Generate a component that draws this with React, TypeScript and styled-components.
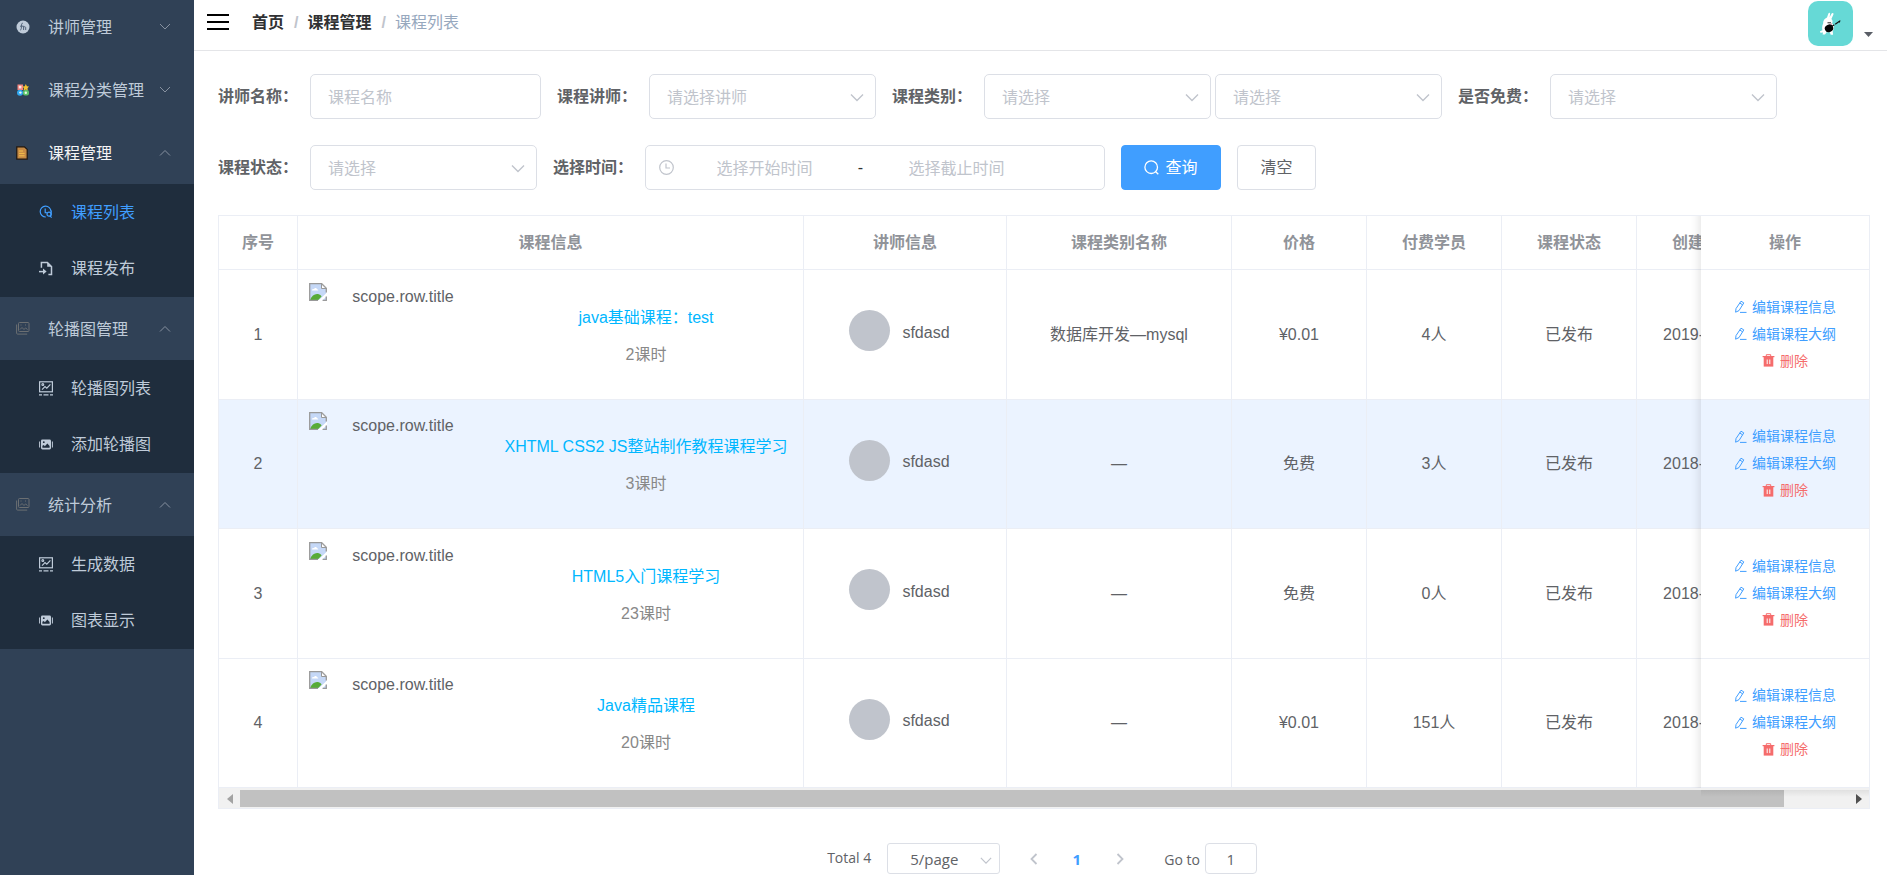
import React, { useState } from "react";
import styled, { createGlobalStyle } from "styled-components";

const fontStack = `"Liberation Sans", "Noto Sans CJK SC", sans-serif`;

const GlobalStyle = createGlobalStyle`
  *, *::before, *::after { box-sizing: border-box; }
  body {
    margin: 0;
    background: #fff;
    color: #606266;
    font: 16px/24px ${fontStack};
  }
  button, input, select { font: inherit; }
  button { cursor: pointer; }
  ul { list-style: none; margin: 0; padding: 0; }
`;

const Page = styled.div`
  display: grid;
  grid-template-columns: 194px minmax(0, 1fr);
  min-height: 100vh;
`;

/* ---------- sidebar ---------- */

const Sidebar = styled.nav`
  background: #304156;
  overflow: hidden;
`;

const Menu = styled.ul`
  margin-top: -5px;
`;

const MenuButton = styled.button<{ $active?: boolean }>`
  display: flex;
  align-items: center;
  width: 100%;
  height: 63px;
  padding: 0 23px 0 14px;
  border: 0;
  background: #304156;
  color: ${(p) => (p.$active ? "#f4f4f5" : "#bfcbd9")};
  text-align: left;
`;

const MenuIcon = styled.span`
  display: flex;
  justify-content: center;
  width: 18px;
  margin-right: 16px;
`;

const MenuText = styled.span`
  flex: 1;
  padding-top: 2px;
  white-space: nowrap;
`;

const SubMenu = styled.ul`
  padding-bottom: 1px;
  background: #1f2d3d;
`;

const SubLink = styled.a<{ $active?: boolean }>`
  display: flex;
  align-items: center;
  height: 56px;
  padding-left: 37px;
  color: ${(p) => (p.$active ? "#409eff" : "#bfcbd9")};
  text-decoration: none;
`;

/* ---------- header ---------- */

const Main = styled.div`
  min-width: 0;
`;

const Header = styled.header`
  display: flex;
  align-items: center;
  height: 51px;
  padding: 0 14px 0 13px;
  border-bottom: 1px solid #e4e5e8;
`;

const PlainButton = styled.button`
  display: flex;
  padding: 0;
  border: 0;
  background: none;
`;

const MenuToggle = styled(PlainButton)`
  margin: 0 23px 6px 0;
`;

const Crumbs = styled.ol`
  display: flex;
  flex: 1;
  margin: 0 0 4px;
  padding: 0;
  list-style: none;
`;

const Crumb = styled.li`
  color: #97a8be;
  & + &::before {
    content: "/";
    margin: 0 9px 0 10px;
    color: #c0c4cc;
    font-weight: 700;
  }
`;

const CrumbLink = styled.a`
  color: #303133;
  font-weight: 700;
  text-decoration: none;
`;

const UserButton = styled(PlainButton)`
  align-items: flex-end;
  gap: 11px;
  margin-bottom: 3px;
`;

const Caret = styled.svg`
  margin-bottom: 9px;
`;

/* ---------- filters ---------- */

const Content = styled.main`
  padding: 23px 17px 0 24px;
`;

const Filters = styled.form`
  display: flex;
  flex-wrap: wrap;
  gap: 26px 16px;
`;

const Field = styled.div`
  display: flex;
  align-items: center;
`;

const Label = styled.label`
  width: 92px;
  font-weight: 700;
  white-space: nowrap;
`;

const TextBox = styled.input`
  width: 231px;
  height: 45px;
  padding: 2px 17px 0;
  border: 1px solid #dcdfe6;
  border-radius: 5px;
  color: #606266;
  &::placeholder { color: #c0c4cc; opacity: 1; }
`;

const SelectWrap = styled.span`
  position: relative;
  display: block;
  & + & { margin-left: 4px; }
`;

const SelectBox = styled.select<{ $small?: boolean }>`
  appearance: none;
  display: block;
  width: ${(p) => (p.$small ? 113 : 227)}px;
  height: ${(p) => (p.$small ? 31 : 45)}px;
  padding: ${(p) => (p.$small ? "0 28px 0 22px" : "2px 34px 0 17px")};
  border: 1px solid #dcdfe6;
  border-radius: ${(p) => (p.$small ? 3 : 5)}px;
  background: #fff;
  color: ${(p) => (p.$small ? "#606266" : "#c0c4cc")};
`;

const SelectArrow = styled.svg<{ $small?: boolean }>`
  position: absolute;
  top: ${(p) => (p.$small ? 13 : 19)}px;
  right: ${(p) => (p.$small ? 8 : 12)}px;
  pointer-events: none;
`;

const RangeBox = styled.div`
  display: flex;
  align-items: center;
  width: 460px;
  height: 45px;
  padding: 0 11px 0 12px;
  border: 1px solid #dcdfe6;
  border-radius: 5px;
`;

const RangeInput = styled.input`
  width: 179px;
  padding: 2px 0 0;
  border: 0;
  outline: 0;
  text-align: center;
  color: #606266;
  &::placeholder { color: #c0c4cc; opacity: 1; }
`;

const RangeDash = styled.span`
  width: 13px;
  text-align: center;
  color: #303133;
`;

const Button = styled.button<{ $primary?: boolean }>`
  display: flex;
  align-items: center;
  justify-content: center;
  gap: 6px;
  width: ${(p) => (p.$primary ? 100 : 79)}px;
  height: 45px;
  padding: 0;
  border: 1px solid ${(p) => (p.$primary ? "#409eff" : "#dcdfe6")};
  border-radius: 4px;
  background: ${(p) => (p.$primary ? "#409eff" : "#fff")};
  color: ${(p) => (p.$primary ? "#fff" : "#606266")};
`;

/* ---------- table ---------- */

const TableFrame = styled.section`
  margin-top: 25px;
  border: 1px solid #ebeef5;
`;

const TableScroll = styled.div`
  overflow-x: auto;
  scrollbar-width: none;
`;

const Table = styled.table`
  width: 100%;
  min-width: 1721px;
  table-layout: fixed;
  border-collapse: separate;
  border-spacing: 0;
`;

const Th = styled.th`
  height: 54px;
  padding: 0 11px;
  border-right: 1px solid #ebeef5;
  border-bottom: 1px solid #ebeef5;
  background: #fff;
  color: #909399;
  font-weight: 700;
`;

const Td = styled.td`
  padding: 0 11px;
  border-right: 1px solid #ebeef5;
  border-bottom: 1px solid #ebeef5;
  background: inherit;
  text-align: center;
`;

const Row = styled.tr<{ $current?: boolean }>`
  height: 129px;
  background: ${(p) => (p.$current ? "#ebf3ff" : "#fff")};
  &:nth-child(odd) { height: 130px; }
`;

const pinned = `
  position: sticky;
  right: 0;
  border-right: 0;
  &::before {
    content: "";
    position: absolute;
    top: 0;
    bottom: -1px;
    left: -10px;
    width: 10px;
    background: linear-gradient(to left, rgba(0, 0, 0, 0.07), rgba(0, 0, 0, 0.02) 60%, rgba(0, 0, 0, 0));
  }
`;

const PinnedTh = styled(Th)`${pinned}`;
const PinnedTd = styled(Td)`${pinned}`;

const Course = styled.div`
  display: grid;
  grid-template-columns: 191px 1fr;
  height: 104px;
`;

const Cover = styled.div`
  display: grid;
  grid-template-columns: 18px 1fr 21px;
  align-items: start;
`;

const CoverText = styled.span`
  padding-top: 2px;
`;

const CourseText = styled.div`
  display: flex;
  flex-direction: column;
  align-items: center;
  gap: 13px;
  padding-top: 23px;
`;

const CourseLink = styled.a`
  color: #00b7ff;
  text-decoration: none;
  white-space: nowrap;
`;

const Lessons = styled.span`
  color: #888;
`;

const Teacher = styled.div`
  display: flex;
  align-items: center;
  justify-content: center;
  gap: 12px;
  padding: 0 11px 8px 0;
`;

const TeacherPhoto = styled.span`
  width: 41px;
  height: 41px;
  border-radius: 50%;
  background: #c0c4cc;
`;

const TeacherName = styled.span`
  padding-top: 4px;
`;

const Actions = styled.div`
  display: flex;
  flex-direction: column;
  align-items: center;
  padding-bottom: 2px;
`;

const ActionButton = styled.button<{ $danger?: boolean }>`
  display: flex;
  align-items: center;
  gap: 5px;
  height: 27px;
  padding: 0;
  border: 0;
  background: none;
  color: ${(p) => (p.$danger ? "#f56c6c" : "#409eff")};
  font-size: 14px;
`;

const ScrollBar = styled.div`
  position: relative;
  display: grid;
  grid-template-columns: 21px 1fr 21px;
  align-items: center;
  justify-items: center;
  height: 20px;
  padding: 2px 0 1px;
  background: #f1f1f1;
  &::after {
    content: "";
    position: absolute;
    top: 2px;
    right: 0;
    width: 168px;
    height: 7px;
    background: linear-gradient(rgba(0, 0, 0, 0.07), rgba(0, 0, 0, 0));
    pointer-events: none;
  }
`;

const ScrollThumb = styled.div`
  justify-self: start;
  width: 96%;
  height: 17px;
  background: #c1c1c1;
`;

/* ---------- pagination ---------- */

const Pagination = styled.nav`
  display: flex;
  align-items: center;
  justify-content: center;
  margin-top: 34px;
  padding-right: 4px;
  font-family: "Open Sans", "Noto Sans CJK SC", sans-serif;
  font-size: 15px;
  line-height: 24px;
`;

const Total = styled.span`
  margin-right: 16px;
  padding-bottom: 2px;
  font-size: 14px;
`;

const PageButton = styled(PlainButton)<{ $current?: boolean }>`
  align-items: center;
  justify-content: center;
  width: 43px;
  height: 30px;
  color: ${(p) => (p.$current ? "#409eff" : "#c0c4cc")};
  font-weight: 700;
`;

const Pages = styled.div`
  display: flex;
  margin: 0 23px 0 12px;
`;

const JumpLabel = styled.label`
  padding-top: 2px;
  font-size: 14px;
`;

const JumpBox = styled.input`
  width: 52px;
  height: 31px;
  margin-left: 5px;
  padding: 0;
  border: 1px solid #dcdfe6;
  border-radius: 4px;
  color: #606266;
  text-align: center;
`;

/* ---------- icons ---------- */

const Chevron = ({ up }: { up?: boolean }) => (
  <svg width="12" height="8" viewBox="0 0 12 8" fill="none" stroke="#8791a0" strokeWidth="1">
    <path d={up ? "M1 6.5 6 1.5 11 6.5" : "M1 1 6 6 11 1"} />
  </svg>
);

const TeacherIcon = () => (
  <svg width="14" height="14" viewBox="0 0 14 14">
    <circle cx="7" cy="7" r="6.5" fill="#bfcbd9" />
    <path d="M4.2 10.2c1.2-.3 1.2-2 1.4-6 .1-1 .9-1 1.4-.6M4 6.2h3M7.6 10V5.8M7.6 7.4c.6-1 2-.9 2.1.2V10" fill="none" stroke="#53647a" strokeWidth="1" />
  </svg>
);

const CategoryIcon = () => (
  <svg width="12" height="12" viewBox="0 0 12 12">
    <rect x="0.5" y="0.5" width="5.5" height="5.5" fill="#f4837d" />
    <rect x="1.8" y="1.800" width="2.600" height="2.600" fill="#fde9e6" />
    <path d="M8.8 0 9.9 2.2 12 2.5 10.5 4.2 10.8 6.4 8.8 5.5 6.6 6.4 7 4.2 5.5 2.5 7.8 2.2z" fill="#f7c32e" />
    <circle cx="3" cy="8.8" r="3" fill="#2fa8f0" />
    <rect x="6" y="6" width="6" height="5.6" rx="2" fill="#5cc46a" />
    <circle cx="3.4" cy="8.6" r="1.200" fill="#e8f6ff" />
    <circle cx="8.8" cy="8.8" r="1.200" fill="#eafbe8" />
  </svg>
);

const CourseIcon = () => (
  <svg width="14" height="14" viewBox="0 0 14 14">
    <path d="M.8.8h7.6l2.8 2.6v9.8H.8z" fill="#c68a45" stroke="#1b1510" strokeWidth="1.2" />
    <path d="M3 5h4M3 7.4h5.6M3 9.8h5.6" stroke="#f3c04a" strokeWidth="1" />
  </svg>
);

const ListIcon = () => (
  <svg width="14" height="14" viewBox="0 0 14 14" fill="none" stroke="currentColor" strokeWidth="1.2">
    <path d="M6.8 12A5.4 5.4 0 1 1 12 6.4" />
    <path d="M6.2 3.4v4.2h1.6" />
    <circle cx="10" cy="9.2" r="2" />
    <path d="M12.2 5.6v4.8M11 10.8l1.6 1.8" />
  </svg>
);

const PublishIcon = () => (
  <svg width="14" height="15" viewBox="0 0 14 15" fill="none" stroke="currentColor" strokeWidth="1.5">
    <path d="M2.4 6.8V1.5h6L12.5 5.6v8H9.4" />
    <path d="M8.2 1.5v4.3h4.3z" fill="currentColor" stroke="none" />
    <path d="M0 10.6h5" />
    <path d="M4 7.6 7.6 10.6 4 13.6z" fill="currentColor" stroke="none" />
  </svg>
);

const GalleryIcon = () => (
  <svg width="14" height="13" viewBox="0 0 14 13" fill="none" stroke="#6b6f72" strokeWidth="1">
    <rect x="2.5" y=".5" width="10.5" height="9" rx="1" />
    <path d="M.6 2.5v8.6q0 1 1 1h9.6M4 7.5l2-2 2 2 1.6-1.6 2 1.8M4.5 3h1M9 3h1" />
  </svg>
);

const ChartImageIcon = () => (
  <svg width="14" height="15" viewBox="0 0 14 15" fill="none" stroke="currentColor" strokeWidth="1.2">
    <rect x=".6" y=".8" width="12.8" height="10" />
    <path d="M3 8.6 6 5.6l1.8 1.6L11.4 3.4" />
    <circle cx="3.8" cy="3.6" r=".9" />
    <path d="M0 13.8h3M4.5 13.8h5M11 13.8h3" />
  </svg>
);

const SlideIcon = () => (
  <svg width="14" height="11" viewBox="0 0 14 11">
    <path d="M.6 2.5v6M13.4 2.5v6" stroke="currentColor" strokeWidth="1" />
    <rect x="2" y=".5" width="10" height="10" rx="1.4" fill="currentColor" />
    <path d="M3.4 8.8V6.8l1.4-.8 1 1.2L8.4 4.600l2.2 2.4v1.8z" fill="#1f2d3d" />
    <circle cx="4.8" cy="3.2" r=".9" fill="#1f2d3d" />
  </svg>
);

const BrokenImage = () => (
  <svg width="18" height="18" viewBox="0 0 18 18">
    <path d="M.7.7h12L17.3 5.3v12H.7z" fill="#c5d8f7" />
    <path d="M3 7.6c0-1.3 1.2-1.7 2-1.4.5-1.6 2.6-1.4 3 0 1-.1 1.4.8 1.2 1.4z" fill="#fff" />
    <path d="M1 17c1.6-4.400 5-6.600 8-6 2 .4 3 1.600 3.600 2.600L9.200 17z" fill="#57ab37" />
    <path d="M9 18 18 9.400V13l-5.200 5z" fill="#fff" />
    <path d="M9 17.300H.7V.7h12L17.300 5.300V9.500M17.300 13.500v3.800H13.600" fill="none" stroke="#999" strokeWidth="1.300" />
    <path d="M12.500.9v4.600h4.600z" fill="#fff" stroke="#999" strokeWidth="1" />
  </svg>
);

const PencilIcon = () => (
  <svg width="13" height="13" viewBox="0 0 13 13" fill="none" stroke="currentColor" strokeWidth="1">
    <path d="M7 1.200 9.800 2.900 5 10.600 1.600 12.200 2 8.600z" />
    <path d="M5.800 3 8.600 4.800M6 12.400h6.500" />
  </svg>
);

const TrashIcon = () => (
  <svg width="13" height="13" viewBox="0 0 13 13">
    <path d="M4.300 2V.7h4.400V2" fill="none" stroke="currentColor" strokeWidth="1" />
    <path d="M.6 2h11.800v1.200H.6z" fill="currentColor" />
    <path d="M1.700 3h9.600v9.600H1.700z" fill="currentColor" />
    <path d="M5.200 5.500v4.600M7.800 5.500v4.600" stroke="#fff" strokeWidth="1" />
  </svg>
);

const UserAvatar = () => (
  <svg width="45" height="45" viewBox="0 0 45 45">
    <rect width="45" height="45" rx="10" fill="#66d9d6" />
    <path d="M19 16.500 20.400 12.600c.8-1.400 1.900-.8 1.700.6l-.5 3 2-3.600c.9-1.300 2.300-.6 1.800.9l-2 4.600c1.400 1.200 1.500 3 .7 4.400 1.200.8 2 2 1.900 3.600-.1 1.800-.8 3.200-1.300 4.400l.4 3.200h-2.400l-.9-2.400h-3.200L17 33.600h-2.400l.4-2-2.600.2-.4-1.600 2.400-1c-.6-2.400-.2-4.800.7-6.400-.3-3 1.600-5.400 3.900-6.300z" fill="#fff" />
    <ellipse cx="21" cy="27.300" rx="4.300" ry="3.700" fill="#050505" transform="rotate(-25 21 27.300)" />
    <path d="M23 26 32 20" stroke="#111" strokeWidth="1.200" strokeDasharray="4 1" />
    <path d="M29.800 20.600 32.600 19.200 31.400 22z" fill="#111" />
    <path d="M19.500 21.800h3.500" stroke="#222" strokeWidth="1" />
    <circle cx="23.400" cy="23" r=".7" fill="#e58aa5" />
  </svg>
);

/* ---------- data ---------- */

type MenuGroup = {
  text: string;
  icon: React.ReactNode;
  active?: boolean;
  items?: { text: string; icon: React.ReactNode; active?: boolean }[];
};

const menu: MenuGroup[] = [
  { text: "讲师管理", icon: <TeacherIcon /> },
  { text: "课程分类管理", icon: <CategoryIcon /> },
  {
    text: "课程管理",
    icon: <CourseIcon />,
    active: true,
    items: [
      { text: "课程列表", icon: <ListIcon />, active: true },
      { text: "课程发布", icon: <PublishIcon /> },
    ],
  },
  {
    text: "轮播图管理",
    icon: <GalleryIcon />,
    items: [
      { text: "轮播图列表", icon: <ChartImageIcon /> },
      { text: "添加轮播图", icon: <SlideIcon /> },
    ],
  },
  {
    text: "统计分析",
    icon: <GalleryIcon />,
    items: [
      { text: "生成数据", icon: <ChartImageIcon /> },
      { text: "图表显示", icon: <SlideIcon /> },
    ],
  },
];

const columns = [
  { title: "序号", width: 79 },
  { title: "课程信息" },
  { title: "讲师信息", width: 203 },
  { title: "课程类别名称", width: 225 },
  { title: "价格", width: 135 },
  { title: "付费学员", width: 135 },
  { title: "课程状态", width: 135 },
  { title: "创建时间", width: 135 },
];

const courses = [
  { title: "java基础课程：test", lessons: 2, category: "数据库开发—mysql", price: "¥0.01", students: 4, created: "2019-02-18" },
  { title: "XHTML CSS2 JS整站制作教程课程学习", lessons: 3, category: "—", price: "免费", students: 3, created: "2018-04-02" },
  { title: "HTML5入门课程学习", lessons: 23, category: "—", price: "免费", students: 0, created: "2018-04-02" },
  { title: "Java精品课程", lessons: 20, category: "—", price: "¥0.01", students: 151, created: "2018-04-02" },
];

const Select = ({ id, label, text, small }: { id?: string; label?: string; text: string; small?: boolean }) => (
  <SelectWrap>
    <SelectBox id={id} aria-label={label} $small={small}>
      <option>{text}</option>
    </SelectBox>
    <SelectArrow $small={small} width={small ? 12 : 14} height="9" viewBox="0 0 14 9" fill="none" stroke="#c0c4cc" strokeWidth="1.4">
      <path d="M1 1.500 7 7.500 13 1.500" />
    </SelectArrow>
  </SelectWrap>
);

export default function App() {
  const [current, setCurrent] = useState(1);

  return (
    <>
      <GlobalStyle />
      <Page>
        <Sidebar>
          <Menu>
            {menu.map((group) => (
              <li key={group.text}>
                <MenuButton type="button" $active={group.active}>
                  <MenuIcon>{group.icon}</MenuIcon>
                  <MenuText>{group.text}</MenuText>
                  <Chevron up={!!group.items} />
                </MenuButton>
                {group.items && (
                  <SubMenu>
                    {group.items.map((item) => (
                      <li key={item.text}>
                        <SubLink href="#" $active={item.active}>
                          <MenuIcon>{item.icon}</MenuIcon>
                          <MenuText>{item.text}</MenuText>
                        </SubLink>
                      </li>
                    ))}
                  </SubMenu>
                )}
              </li>
            ))}
          </Menu>
        </Sidebar>

        <Main>
          <Header>
            <MenuToggle type="button" aria-label="menu">
              <svg width="22" height="16" viewBox="0 0 22 16" fill="#000">
                <path d="M0 0h22v2H0zM0 7h22v2H0zM0 14h22v2H0z" />
              </svg>
            </MenuToggle>
            <Crumbs>
              <Crumb><CrumbLink href="#">首页</CrumbLink></Crumb>
              <Crumb><CrumbLink href="#">课程管理</CrumbLink></Crumb>
              <Crumb>课程列表</Crumb>
            </Crumbs>
            <UserButton type="button" aria-label="user">
              <UserAvatar />
              <Caret width="9" height="5" viewBox="0 0 9 5" fill="#5a5e66">
                <path d="M0 0h9L4.500 5z" />
              </Caret>
            </UserButton>
          </Header>

          <Content>
            <Filters onSubmit={(e) => e.preventDefault()}>
              <Field>
                <Label htmlFor="name">讲师名称：</Label>
                <TextBox id="name" placeholder="课程名称" />
              </Field>
              <Field>
                <Label htmlFor="teacher">课程讲师：</Label>
                <Select id="teacher" text="请选择讲师" />
              </Field>
              <Field>
                <Label htmlFor="category">课程类别：</Label>
                <Select id="category" text="请选择" />
                <Select label="课程子类别" text="请选择" />
              </Field>
              <Field>
                <Label htmlFor="free">是否免费：</Label>
                <Select id="free" text="请选择" />
              </Field>
              <Field>
                <Label htmlFor="status">课程状态：</Label>
                <Select id="status" text="请选择" />
              </Field>
              <Field>
                <Label htmlFor="start">选择时间：</Label>
                <RangeBox>
                  <svg width="17" height="17" viewBox="0 0 17 17" fill="none" stroke="#c0c4cc" strokeWidth="1.200">
                    <circle cx="8.500" cy="8.500" r="6.800" />
                    <path d="M8 4.500v4.500h4" />
                  </svg>
                  <RangeInput id="start" placeholder="选择开始时间" />
                  <RangeDash>-</RangeDash>
                  <RangeInput aria-label="截止时间" placeholder="选择截止时间" />
                </RangeBox>
              </Field>
              <Button type="submit" $primary>
                <svg width="15" height="15" viewBox="0 0 15 15" fill="none" stroke="#fff" strokeWidth="1.300">
                  <circle cx="7.200" cy="7.200" r="6.300" />
                  <path d="M11.200 11.200 14.300 14.300" />
                </svg>
                查询
              </Button>
              <Button type="reset">清空</Button>
            </Filters>

            <TableFrame>
              <TableScroll>
                <Table>
                  <colgroup>
                    {columns.map((c) => <col key={c.title} width={c.width} />)}
                    <col width={168} />
                  </colgroup>
                  <thead>
                    <tr>
                      {columns.map((c) => <Th key={c.title} scope="col">{c.title}</Th>)}
                      <PinnedTh scope="col">操作</PinnedTh>
                    </tr>
                  </thead>
                  <tbody>
                    {courses.map((c, i) => (
                      <Row key={c.title} $current={i === current} onClick={() => setCurrent(i)}>
                        <Td>{i + 1}</Td>
                        <Td>
                          <Course>
                            <Cover>
                              <BrokenImage />
                              <CoverText>scope.row.title</CoverText>
                            </Cover>
                            <CourseText>
                              <CourseLink href="#">{c.title}</CourseLink>
                              <Lessons>{c.lessons}课时</Lessons>
                            </CourseText>
                          </Course>
                        </Td>
                        <Td>
                          <Teacher>
                            <TeacherPhoto />
                            <TeacherName>sfdasd</TeacherName>
                          </Teacher>
                        </Td>
                        <Td>{c.category}</Td>
                        <Td>{c.price}</Td>
                        <Td>{c.students}人</Td>
                        <Td>已发布</Td>
                        <Td>{c.created}</Td>
                        <PinnedTd>
                          <Actions>
                            <ActionButton type="button"><PencilIcon />编辑课程信息</ActionButton>
                            <ActionButton type="button"><PencilIcon />编辑课程大纲</ActionButton>
                            <ActionButton type="button" $danger><TrashIcon />删除</ActionButton>
                          </Actions>
                        </PinnedTd>
                      </Row>
                    ))}
                  </tbody>
                </Table>
              </TableScroll>
              <ScrollBar>
                <svg width="6" height="10" viewBox="0 0 6 10" fill="#a3a3a3"><path d="M6 0v10L0 5z" /></svg>
                <ScrollThumb />
                <svg width="6" height="10" viewBox="0 0 6 10" fill="#505050"><path d="M0 0v10l6-5z" /></svg>
              </ScrollBar>
            </TableFrame>

            <Pagination aria-label="pagination">
              <Total>Total 4</Total>
              <Select label="page size" text="5/page" small />
              <Pages>
                <PageButton type="button" aria-label="previous page">
                  <svg width="8" height="12" viewBox="0 0 8 12" fill="none" stroke="currentColor" strokeWidth="1.800"><path d="M6.500 1 1.500 6l5 5" /></svg>
                </PageButton>
                <PageButton type="button" $current>1</PageButton>
                <PageButton type="button" aria-label="next page">
                  <svg width="8" height="12" viewBox="0 0 8 12" fill="none" stroke="currentColor" strokeWidth="1.800"><path d="M1.500 1l5 5-5 5" /></svg>
                </PageButton>
              </Pages>
              <JumpLabel htmlFor="jump">Go to</JumpLabel>
              <JumpBox id="jump" defaultValue="1" />
            </Pagination>
          </Content>
        </Main>
      </Page>
    </>
  );
}
